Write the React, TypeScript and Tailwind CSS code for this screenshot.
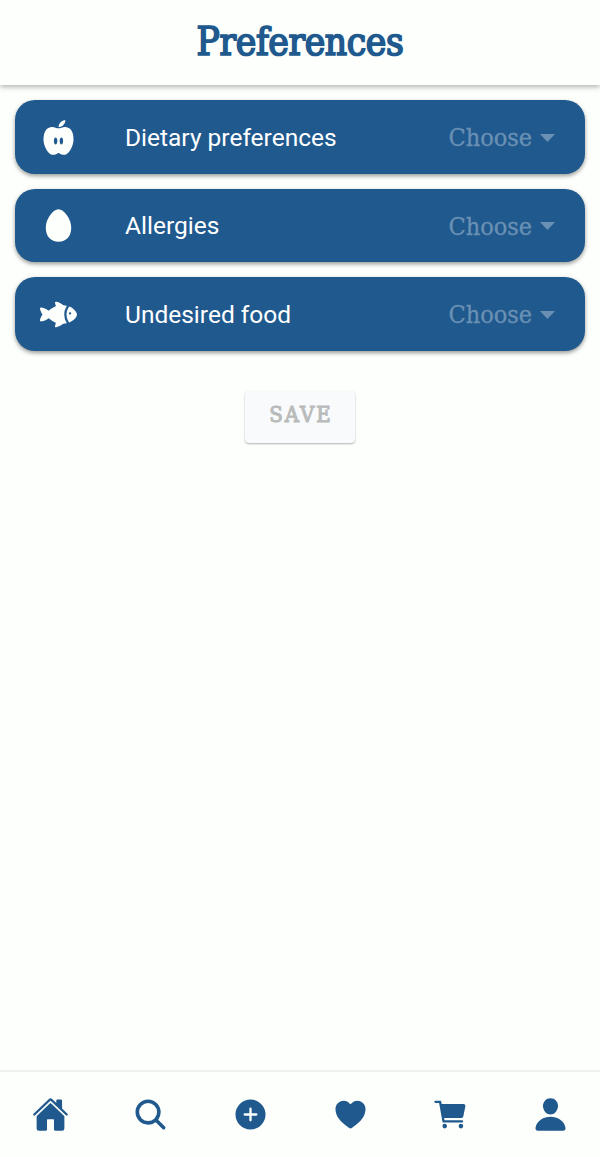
import type { IconType } from "react-icons";
import {
  IoNutrition,
  IoEgg,
  IoFish,
  IoHome,
  IoSearch,
  IoAddCircle,
  IoHeart,
  IoCart,
  IoPerson,
} from "react-icons/io5";

const rows: { label: string; Icon: IconType }[] = [
  { label: "Dietary preferences", Icon: IoNutrition },
  { label: "Allergies", Icon: IoEgg },
  { label: "Undesired food", Icon: IoFish },
];

const tabs: { label: string; Icon: IconType }[] = [
  { label: "Home", Icon: IoHome },
  { label: "Search", Icon: IoSearch },
  { label: "Add", Icon: IoAddCircle },
  { label: "Favourites", Icon: IoHeart },
  { label: "Cart", Icon: IoCart },
  { label: "Profile", Icon: IoPerson },
];

const slab = "font-['Roboto_Slab','DejaVu_Serif_Condensed','DejaVu_Serif',serif]";

function PreferenceRow({ label, Icon }: { label: string; Icon: IconType }) {
  return (
    <button className="flex h-[73.5px] w-full items-center rounded-[20px] bg-[#20598e] pt-px pr-[30px] pl-[25px] text-left shadow-[0_2px_4px_rgba(0,0,0,0.4)]">
      <Icon className="size-[37px] shrink-0 text-[#fdfffc]" />
      <span className="ml-[48px] flex-1 pt-px font-['Roboto',sans-serif] text-[24.5px] leading-none whitespace-nowrap text-white">
        {label}
      </span>
      <span className={`${slab} flex w-[106.5px] items-center justify-between pt-px text-[25px] leading-none text-[#6a90b4]`}>
        <span className="whitespace-nowrap [-webkit-text-stroke:0.3px_#6a90b4]">Choose</span>
        <svg viewBox="0 0 15 8" className="h-2 w-[15px] shrink-0" fill="currentColor">
          <path d="M0 0h15L7.5 8z" />
        </svg>
      </span>
    </button>
  );
}

export default function App() {
  return (
    <div className="flex h-[1157px] w-[600px] flex-col bg-[#fdfffc]">
      <header className="flex h-[85px] shrink-0 items-center justify-center pb-px shadow-[0_2px_5px_rgba(0,0,0,0.3)]">
        <h1 className={`${slab} text-[38.5px] leading-none font-normal tracking-[-0.35px] text-[#20598e] [-webkit-text-stroke:1.7px_#20598e]`}>
          Preferences
        </h1>
      </header>
      <main className="flex flex-1 flex-col items-center gap-[15px] px-[15px] pt-[15px]">
        {rows.map((row) => (
          <PreferenceRow key={row.label} {...row} />
        ))}
        <button
          disabled
          className={`${slab} mt-[25px] h-[52px] w-[110px] rounded-[4px] bg-[#f8fafc] pb-[3px] pl-[2px] text-[22px] leading-none font-normal tracking-[2px] text-[#b9bbba] shadow-[0_1px_2px_rgba(0,0,0,0.3)] [-webkit-text-stroke:1px_#b9bbba]`}
        >
          SAVE
        </button>
      </main>
      <nav className="grid h-[87px] shrink-0 grid-cols-6 place-items-center border-t-2 border-[#eff1ef] text-[#20598e]">
        {tabs.map(({ label, Icon }) => (
          <button key={label} aria-label={label}>
            <Icon className="size-[37px]" />
          </button>
        ))}
      </nav>
    </div>
  );
}
